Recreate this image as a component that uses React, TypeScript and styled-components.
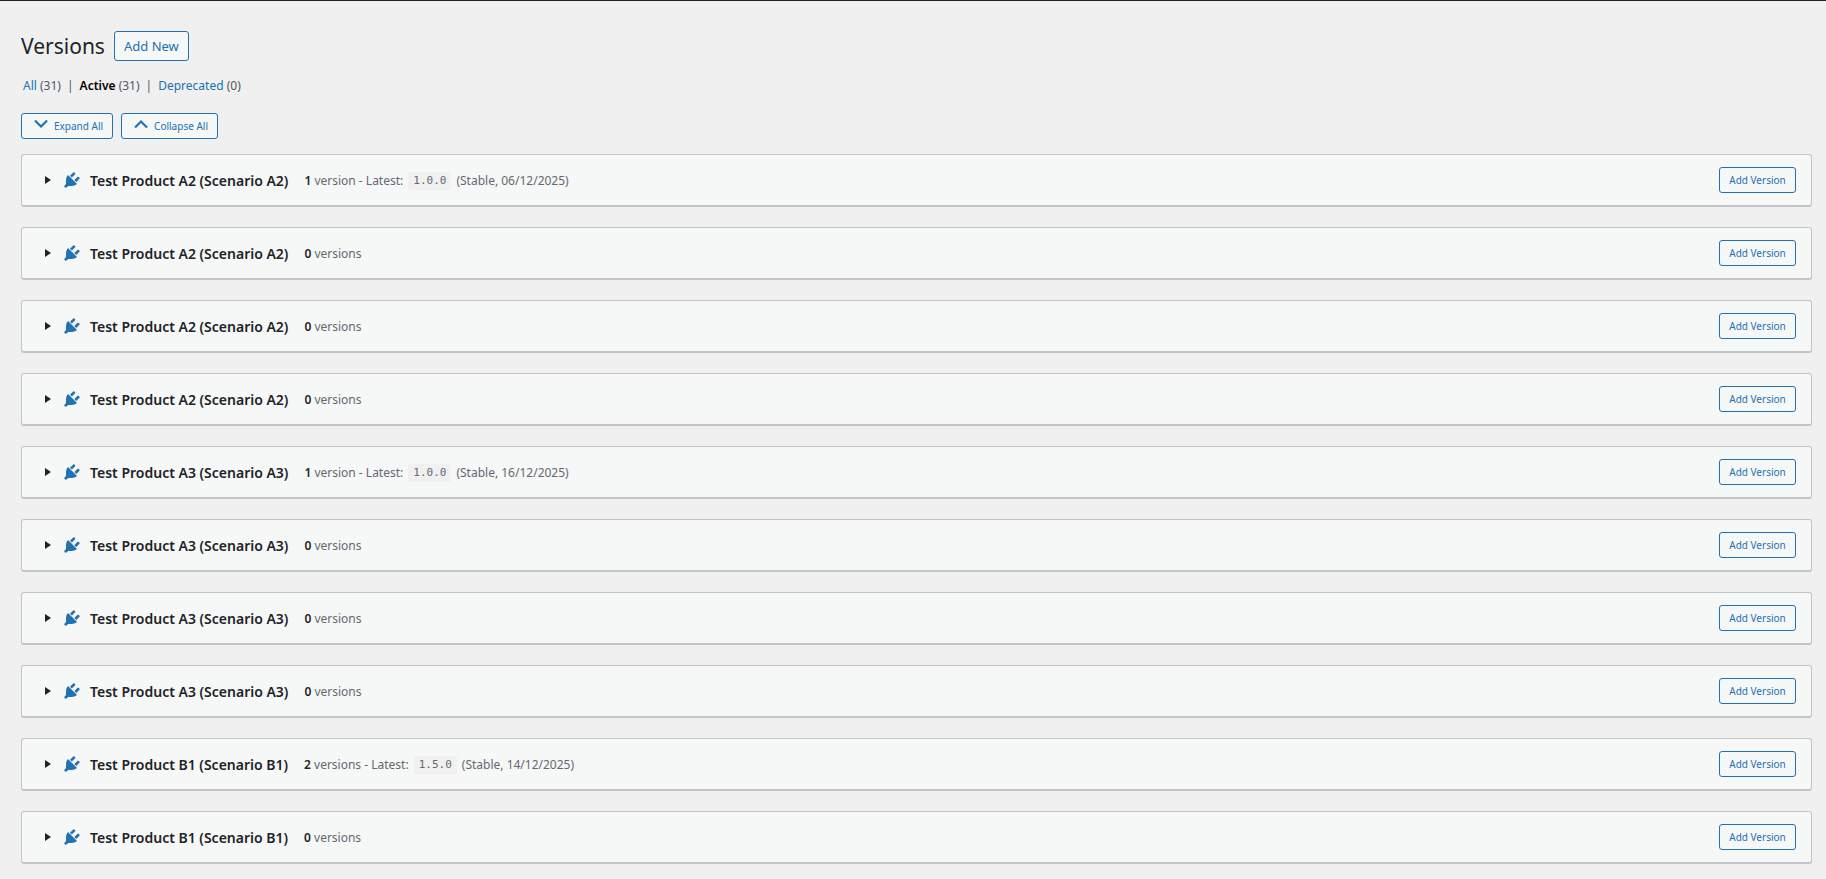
import React, { useState } from 'react';
import styled, { createGlobalStyle } from 'styled-components';

const GlobalStyle = createGlobalStyle`
  * {
    box-sizing: border-box;
  }
  body {
    margin: 0;
    background: #f0f0f0;
    color: #1d2327;
    font-family: 'Noto Sans', 'Open Sans', sans-serif;
    font-size: 12px;
    line-height: 20px;
  }
`;

const Page = styled.main`
  border-top: 1px solid #1d2327;
  padding: 30px 14px 0 21px;
`;

const Header = styled.header`
  display: flex;
  align-items: center;
  gap: 9px;
`;

const Title = styled.h1`
  margin: 0;
  font-size: 21px;
  font-weight: 400;
  line-height: 30px;
`;

const Button = styled.button<{ $small?: boolean }>`
  display: inline-flex;
  align-items: center;
  justify-content: center;
  flex-shrink: 0;
  gap: 3px;
  height: ${(p) => (p.$small ? 26 : 30)}px;
  min-width: ${(p) => (p.$small ? 77 : 75)}px;
  padding: 0 9px;
  border: 1px solid #2271b1;
  border-radius: 3px;
  background: #f6f7f7;
  color: #2271b1;
  font-family: inherit;
  font-size: ${(p) => (p.$small ? 10 : 13)}px;
  white-space: nowrap;
  cursor: pointer;
`;

const Filters = styled.ul`
  display: flex;
  margin: 15px 0 17px;
  padding: 0 2px;
  list-style: none;
  color: #50575e;
`;

const FilterItem = styled.li`
  & + &::before {
    content: '|';
    margin: 0 6px;
  }
`;

const FilterLink = styled.a<{ $current?: boolean }>`
  color: ${(p) => (p.$current ? '#000' : '#2271b1')};
  font-weight: ${(p) => (p.$current ? 600 : 400)};
  text-decoration: none;
`;

const Toolbar = styled.div`
  display: flex;
  gap: 8px;
  margin-bottom: 15px;
`;

const Chevron = styled.svg`
  width: 20px;
  height: 20px;
  margin-bottom: 4px;
  fill: currentColor;
`;

const ProductList = styled.div`
  display: flex;
  flex-direction: column;
  gap: 20px;
`;

const Card = styled.section`
  border: 1px solid #c3c4c7;
  border-bottom-width: 2px;
  border-radius: 3px;
  background: #f6f7f7;
`;

const CardHeader = styled.div`
  display: flex;
  align-items: center;
  min-height: 50px;
  padding: 0 15px 0 23px;
`;

const Toggle = styled.button`
  display: flex;
  align-items: center;
  padding: 0;
  border: 0;
  background: none;
  color: inherit;
  font: inherit;
  cursor: pointer;
`;

const Triangle = styled.svg<{ $open: boolean }>`
  width: 6px;
  height: 8px;
  margin-right: 11px;
  fill: #1d2327;
  transform: rotate(${(p) => (p.$open ? 90 : 0)}deg);
`;

const PlugIcon = styled.svg`
  width: 20px;
  height: 20px;
  margin-right: 8px;
  fill: #2271b1;
`;

const ProductName = styled.span`
  padding-top: 2px;
  font-size: 14px;
  font-weight: 600;
`;

const Meta = styled.div`
  display: flex;
  align-items: center;
  flex: 1;
  gap: 5px;
  margin-left: 16px;
  padding-top: 2px;
  color: #646970;
`;

const Count = styled.strong`
  color: #1d2327;
  font-weight: 600;
`;

const VersionCode = styled.code`
  padding: 0 5px;
  border-radius: 3px;
  background: #f0f0f1;
  font-family: 'DejaVu Sans Mono', monospace;
  font-size: 11px;
  line-height: 18px;
`;

const Details = styled.div`
  padding: 10px 23px;
  border-top: 1px solid #c3c4c7;
`;

interface Product {
  name: string;
  count: number;
  latest?: string;
  date?: string;
}

const A2 = 'Test Product A2 (Scenario A2)';
const A3 = 'Test Product A3 (Scenario A3)';
const B1 = 'Test Product B1 (Scenario B1)';

const products: Product[] = [
  { name: A2, count: 1, latest: '1.0.0', date: '06/12/2025' },
  { name: A2, count: 0 },
  { name: A2, count: 0 },
  { name: A2, count: 0 },
  { name: A3, count: 1, latest: '1.0.0', date: '16/12/2025' },
  { name: A3, count: 0 },
  { name: A3, count: 0 },
  { name: A3, count: 0 },
  { name: B1, count: 2, latest: '1.5.0', date: '14/12/2025' },
  { name: B1, count: 0 },
];

function ProductCard({ product, open, onToggle }: { product: Product; open: boolean; onToggle: () => void }) {
  const { name, count, latest, date } = product;
  return (
    <Card>
      <CardHeader>
        <Toggle type="button" aria-expanded={open} onClick={onToggle}>
          <Triangle viewBox="0 0 6 8" $open={open} aria-hidden="true">
            <path d="M0 0l6 4-6 4z" />
          </Triangle>
          <PlugIcon viewBox="0 0 20 20" aria-hidden="true">
            <path d="M13.11 4.36L9.87 7.6 8 5.73l3.24-3.24c.35-.34 1.05-.2 1.56.32.52.51.66 1.21.31 1.55zm-8 1.77l.91-1.12 9.01 9.01-1.19.84c-.71.71-2.63 1.16-3.82 1.16H6.14L4.9 17.26c-.59.59-1.54.59-2.12 0-.59-.58-.59-1.53 0-2.12l1.24-1.24v-3.88c0-1.13.4-3.19 1.09-3.89zm7.26 3.97l3.24-3.24c.34-.35 1.04-.21 1.55.31.52.51.66 1.21.31 1.55l-3.24 3.25z" />
          </PlugIcon>
          <ProductName>{name}</ProductName>
        </Toggle>
        <Meta>
          <span>
            <Count>{count}</Count> {count === 1 ? 'version' : 'versions'}
            {latest && ' - Latest:'}
          </span>
          {latest && <VersionCode>{latest}</VersionCode>}
          {latest && <span>(Stable, {date})</span>}
        </Meta>
        <Button type="button" $small>Add Version</Button>
      </CardHeader>
      {open && <Details>{latest ? `${latest} – ${date}` : 'No versions yet.'}</Details>}
    </Card>
  );
}

export default function App() {
  const [open, setOpen] = useState<boolean[]>(products.map(() => false));
  const setAll = (value: boolean) => setOpen(products.map(() => value));

  return (
    <Page>
      <GlobalStyle />
      <Header>
        <Title>Versions</Title>
        <Button type="button">Add New</Button>
      </Header>
      <Filters>
        <FilterItem><FilterLink href="#all">All</FilterLink> (31)</FilterItem>
        <FilterItem><FilterLink href="#active" $current aria-current="page">Active</FilterLink> (31)</FilterItem>
        <FilterItem><FilterLink href="#deprecated">Deprecated</FilterLink> (0)</FilterItem>
      </Filters>
      <Toolbar>
        <Button type="button" $small onClick={() => setAll(true)}>
          <Chevron viewBox="0 0 20 20" aria-hidden="true"><path d="M5 6l5 5 5-5 2 1-7 7-7-7z" /></Chevron>
          Expand All
        </Button>
        <Button type="button" $small onClick={() => setAll(false)}>
          <Chevron viewBox="0 0 20 20" aria-hidden="true"><path d="M15 14l-5-5-5 5-2-1 7-7 7 7z" /></Chevron>
          Collapse All
        </Button>
      </Toolbar>
      <ProductList>
        {products.map((product, i) => (
          <ProductCard
            key={i}
            product={product}
            open={open[i]}
            onToggle={() => setOpen(open.map((v, j) => (j === i ? !v : v)))}
          />
        ))}
      </ProductList>
    </Page>
  );
}
